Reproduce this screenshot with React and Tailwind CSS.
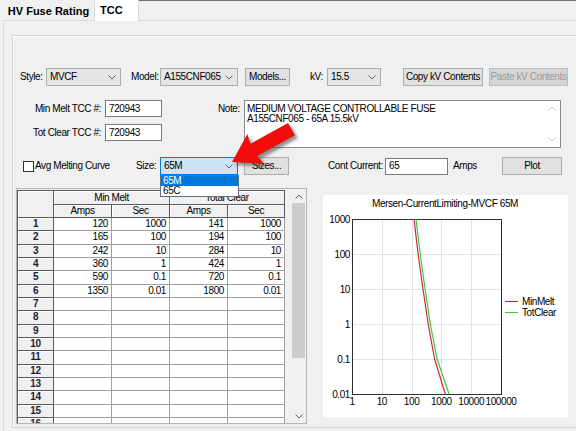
import clsx from 'clsx';

const FONT = "font-['Liberation_Sans',Arial,sans-serif]";

const minMelt = [[120, 1000], [165, 100], [242, 10], [360, 1], [590, 0.1], [1350, 0.01]];
const totClear = [[141, 1000], [194, 100], [284, 10], [424, 1], [720, 0.1], [1800, 0.01]];

// chart scale (log-log)
const X0 = 29;
const XD = 29.8;
const Y0 = 24;
const YD = 35;
const px = (a) => X0 + XD * Math.log10(a);
const py = (s) => Y0 + YD * (3 - Math.log10(s));
const pts = (d) => d.map(([a, s]) => `${px(a).toFixed(1)},${py(s).toFixed(1)}`).join(' ');

function Chevron({ up, color = '#606060' }) {
  return (
    <svg width="8" height="5" viewBox="0 0 8 5" className="block">
      <polyline
        points={up ? '0.5,4.5 4,1 7.5,4.5' : '0.5,0.5 4,4 7.5,0.5'}
        fill="none"
        stroke={color}
        strokeWidth="1"
      />
    </svg>
  );
}

function Combo({ value, className, focused }) {
  return (
    <div
      className={clsx(
        'flex h-[18px] items-center justify-between border pl-[3px] pr-[4px]',
        focused ? 'border-[#0078d7] bg-[#cce4f7]' : 'border-[#acacac] bg-[#e5e5e5]',
        className
      )}
    >
      <span>{value}</span>
      <Chevron />
    </div>
  );
}

function Btn({ children, className, disabled }) {
  return (
    <button
      type="button"
      className={clsx(
        'flex h-[18px] items-center justify-center border',
        disabled ? 'border-[#bfbfbf] bg-[#d5d5d5] text-[#9a9a9a]' : 'border-[#adadad] bg-[#e1e1e1]',
        className
      )}
    >
      {children}
    </button>
  );
}

function Field({ value, className }) {
  return (
    <div className={clsx('flex h-[17px] items-center border border-[#7a7a7a] bg-white pl-[3px]', className)}>
      {value}
    </div>
  );
}

const rows = [
  ['120', '1000', '141', '1000'],
  ['165', '100', '194', '100'],
  ['242', '10', '284', '10'],
  ['360', '1', '424', '1'],
  ['590', '0.1', '720', '0.1'],
  ['1350', '0.01', '1800', '0.01'],
];

const headCell = 'flex items-center justify-center border-r border-b border-[#5a5a5a] bg-[#f0f0f0] shadow-[inset_1px_1px_0_#fff]';

function Grid() {
  const body = [];
  for (let i = 0; i < 16; i++) {
    const r = rows[i] || ['', '', '', ''];
    body.push(
      <div key={`h${i}`} className={clsx(headCell, 'font-bold text-[#1c1c3c]')}>
        {i + 1}
      </div>
    );
    r.forEach((v, j) => {
      body.push(
        <div
          key={`c${i}-${j}`}
          className="flex items-center justify-end border-r border-b border-[#a0a0a0] bg-white pr-[3px]"
        >
          {v}
        </div>
      );
    });
  }
  return (
    <div className="grid w-[268px] grid-cols-[36px_58px_58px_58px_57px] grid-rows-[14px_13px_repeat(16,13.33px)] border-l border-t border-[#5a5a5a]">
      <div className={clsx(headCell, 'row-span-2')} />
      <div className={clsx(headCell, 'col-span-2')}>Min Melt</div>
      <div className={clsx(headCell, 'col-span-2')}>Total Clear</div>
      <div className={headCell}>Amps</div>
      <div className={headCell}>Sec</div>
      <div className={headCell}>Amps</div>
      <div className={headCell}>Sec</div>
      {body}
    </div>
  );
}

function Chart() {
  const yLabels = ['1000', '100', '10', '1', '0.1', '0.01'];
  const xLabels = ['1', '10', '100', '1000', '10000', '100000'];
  return (
    <svg width="245" height="222" className="block" fontSize="10">
      <text x="122" y="12" textAnchor="middle">
        Mersen-CurrentLimiting-MVCF 65M
      </text>
      {[1, 2, 3, 4].map((d) => (
        <line
          key={`vx${d}`}
          x1={Math.round(X0 + XD * d) + 0.5}
          x2={Math.round(X0 + XD * d) + 0.5}
          y1={Y0}
          y2={Y0 + YD * 5}
          stroke="#e3e3e3"
        />
      ))}
      {[1, 2, 3, 4].map((k) => (
        <line
          key={`hy${k}`}
          x1={X0}
          x2={X0 + 149}
          y1={Y0 + YD * k + 0.5}
          y2={Y0 + YD * k + 0.5}
          stroke="#e3e3e3"
        />
      ))}
      <rect x={X0 + 0.5} y={Y0 + 0.5} width="149" height="175" fill="none" stroke="#303030" />
      {yLabels.map((l, k) => (
        <text key={l} x="27" y={Y0 + YD * k + 3.5} textAnchor="end">
          {l}
        </text>
      ))}
      {xLabels.map((l, d) => (
        <text key={l} x={X0 + XD * d} y="210" textAnchor="middle">
          {l}
        </text>
      ))}
      <polyline points={pts(totClear)} fill="none" stroke="#3cc83c" strokeWidth="1.2" />
      <polyline points={pts(minMelt)} fill="none" stroke="#c8283c" strokeWidth="1.2" />
      <line x1="182" x2="195" y1="106.5" y2="106.5" stroke="#c8283c" />
      <text x="199" y="110">MinMelt</text>
      <line x1="182" x2="195" y1="117.5" y2="117.5" stroke="#3cc83c" />
      <text x="199" y="121">TotClear</text>
    </svg>
  );
}

function RedArrow() {
  const shape = '0,0 27,-17 25,-7 68,-7 68,7 25,7 27,17';
  return (
    <svg width="96" height="70" className="pointer-events-none absolute left-[218px] top-[108px]">
      <defs>
        <filter id="arrowShadow" x="-20%" y="-20%" width="140%" height="140%">
          <feGaussianBlur stdDeviation="1.8" />
        </filter>
      </defs>
      <g transform="translate(17,57) rotate(-29)">
        <polygon points={shape} fill="#3a3a3a" opacity="0.55" filter="url(#arrowShadow)" />
      </g>
      <g transform="translate(14,54) rotate(-29)">
        <polygon points={shape} fill="#f20d0d" />
      </g>
    </svg>
  );
}

export default function App() {
  return (
    <div className={`${FONT} relative h-[431px] w-[576px] overflow-hidden bg-[#f0f0f0] text-[10px] leading-none tracking-[-0.4px] text-black`}>
      {/* Tabs */}
      <div className="flex h-[20px] items-stretch">
        <div className="w-[3px]" />
        <div className="flex w-[91px] items-center justify-center pt-[3px] text-[11px] font-bold tracking-normal">
          HV Fuse Rating
        </div>
        <div className="relative z-10 -mb-px w-[45px] border-x border-[#d9d9d9] bg-white pl-[5px] pt-[5px] text-[11px] font-bold tracking-normal">
          TCC
        </div>
        <div className="flex-1 border-t border-[#707070]" />
      </div>

      {/* Tab page */}
      <div className="ml-[3px] h-[411px] border-l border-t border-[#d9d9d9] pl-[8px] pt-[14px]">
        <div className="h-[393px] border-y border-l border-[#d5d5d5] shadow-[inset_1px_1px_0_#fff]">
          {/* Style / Model / kV */}
          <div className="mt-[32px] flex h-[18px] items-center pl-[7px]">
            <span className="w-[26px]">Style:</span>
            <Combo value="MVCF" className="w-[75px]" />
            <span className="ml-[10px] w-[29px]">Model:</span>
            <Combo value="A155CNF065" className="w-[78px]" />
            <Btn className="ml-[7px] w-[45px]">Models...</Btn>
            <span className="ml-[20px] w-[17px]">kV:</span>
            <Combo value="15.5" className="w-[54px]" />
            <Btn className="ml-[22px] w-[80px]">Copy kV Contents</Btn>
            <Btn className="ml-[6px] w-[79px]" disabled>
              Paste kV Contents
            </Btn>
          </div>

          {/* TCC numbers + note */}
          <div className="mt-[14px] flex h-[48px]">
            <div className="flex flex-col">
              <div className="flex h-[17px] items-center">
                <span className="w-[88px] text-right">Min Melt TCC #:</span>
                <Field value="720943" className="ml-[4px] w-[57px]" />
              </div>
              <div className="mt-[7px] flex h-[17px] items-center">
                <span className="w-[88px] text-right">Tot Clear TCC #:</span>
                <Field value="720943" className="ml-[4px] w-[57px]" />
              </div>
            </div>
            <span className="ml-[56px] w-[26px] pt-[4px]">Note:</span>
            <div className="flex h-[48px] w-[317px] border border-[#8a8a8a] bg-white">
              <div className="flex-1 pl-[2px] pt-[3px] leading-[10px]">
                <div>MEDIUM VOLTAGE CONTROLLABLE FUSE</div>
                <div>A155CNF065 - 65A 15.5kV</div>
              </div>
              <div className="flex w-[16px] flex-col items-center justify-between py-[5px]">
                <Chevron up color="#c4c4c4" />
                <Chevron color="#c4c4c4" />
              </div>
            </div>
          </div>

          {/* Avg / Size / Cont Current */}
          <div className="mt-[9px] flex h-[18px] items-center pl-[10px]">
            <div className="h-[11px] w-[11px] border border-[#333] bg-white" />
            <span className="ml-[1px] w-[101px]">Avg Melting Curve</span>
            <span className="w-[24px]">Size:</span>
            <Combo value="65M" className="w-[78px]" focused />
            <Btn className="ml-[6px] w-[45px]">Sizes...</Btn>
            <span className="ml-[39px] w-[57px]">Cont Current:</span>
            <Field value="65" className="w-[63px]" />
            <span className="ml-[5px] w-[49px]">Amps</span>
            <Btn className="w-[60px]">Plot</Btn>
          </div>

          {/* Table + chart */}
          <div className="mt-[13px] flex items-start pl-[3px]">
            <div className="flex h-[236px] w-[291px] border border-[#b4b4b4]">
              <div className="flex-1 overflow-hidden pt-[1px]">
                <Grid />
              </div>
              <div className="flex w-[15px] flex-col bg-[#f0f0f0]">
                <div className="flex h-[14px] items-center justify-center">
                  <Chevron up />
                </div>
                <div className="mx-[1px] h-[155px] bg-[#cdcdcd]" />
                <div className="flex-1" />
                <div className="flex h-[14px] items-center justify-center">
                  <Chevron />
                </div>
              </div>
            </div>
            <div className="ml-[16px] mt-[7px] h-[222px] w-[245px] bg-white">
              <Chart />
            </div>
          </div>
        </div>
      </div>

      {/* Open size dropdown */}
      <div className="absolute left-[160px] top-[175px] w-[79px] border border-[#5f6f80] bg-white">
        <div className="h-[10px] bg-[#0078d7] pl-[2px] leading-[10px] text-white">65M</div>
        <div className="h-[10px] pl-[2px] leading-[10px]">65C</div>
      </div>

      <RedArrow />
    </div>
  );
}
